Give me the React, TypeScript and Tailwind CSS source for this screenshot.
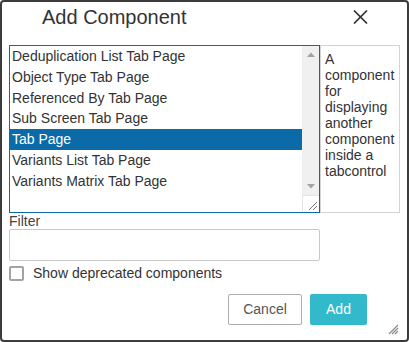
import React from "react";

const items = [
  "Deduplication List Tab Page",
  "Object Type Tab Page",
  "Referenced By Tab Page",
  "Sub Screen Tab Page",
  "Tab Page",
  "Variants List Tab Page",
  "Variants Matrix Tab Page",
];

export default function App() {
  return (
    <div className="relative w-[409px] h-[342px] border-2 border-[#3c3c3c] rounded-[4px] bg-white flex flex-col text-[#333] font-['Liberation_Sans',Arial,sans-serif]">
      <div className="h-[30px] flex items-center justify-between pl-[40px] pr-[39px]">
        <div className="text-[20px] leading-[24px] text-[#333]">Add Component</div>
        <svg width="15" height="14" viewBox="0 0 15 14" className="block">
          <path d="M1 0.5 L14 13.5 M14 0.5 L1 13.5" stroke="#333" strokeWidth="1.7" fill="none" />
        </svg>
      </div>

      <div className="mt-[13px] flex pl-[7px]">
        <div className="w-[311px] h-[168px] border border-[#0b6aa8] flex">
          <div className="flex-1 flex flex-col">
            {items.map((it) => (
              <div
                key={it}
                className={
                  it === "Tab Page"
                    ? "h-[20.8px] leading-[20.8px] pl-[2px] text-[14px] bg-[#0b6aa8] text-white whitespace-nowrap"
                    : "h-[20.8px] leading-[20.8px] pl-[2px] text-[14px] text-[#333] whitespace-nowrap"
                }
              >
                {it}
              </div>
            ))}
          </div>
          <div className="w-[17px] bg-[#f0f0f0] flex flex-col">
            <div className="h-[17px] flex items-center justify-center">
              <svg width="8" height="5" viewBox="0 0 8 5">
                <path d="M0 5 L4 0.5 L8 5 Z" fill="#a3a3a3" />
              </svg>
            </div>
            <div className="flex-1" />
            <div className="h-[17px] flex items-center justify-center">
              <svg width="8" height="5" viewBox="0 0 8 5">
                <path d="M0 0 L4 4.5 L8 0 Z" fill="#a3a3a3" />
              </svg>
            </div>
            <div className="h-[17px] bg-white border-l border-t border-[#e4e4e4] relative">
              <svg width="17" height="17" viewBox="0 0 17 17" className="absolute right-0 bottom-0">
                <path d="M7 15 L15 7 M11 15 L15 11" stroke="#7a7a7a" strokeWidth="1" fill="none" />
              </svg>
            </div>
          </div>
        </div>
        <div className="w-[80px] h-[168px] border border-[#d3d3d3] pl-[4px] pt-[5px] text-[14px] leading-[16px] text-[#333]">
          A component for displaying another component inside a tabcontrol
        </div>
      </div>

      <div className="pl-[7px] text-[14px] leading-[16px] text-[#444]">Filter</div>
      <div className="ml-[7px] w-[311px] h-[32px] border border-[#c8c8c8] rounded-[2px] bg-white" />

      <div className="mt-[5px] ml-[7px] flex items-center gap-[9px]">
        <div className="w-[15px] h-[15px] border-2 border-[#a3a3a3] rounded-[2px]" />
        <div className="text-[14px] leading-[15px] text-[#333]">Show deprecated components</div>
      </div>

      <div className="mt-[13px] flex justify-end pr-[40px] gap-[8px]">
        <div className="w-[74px] h-[31px] border border-[#adadad] rounded-[2px] flex items-center justify-center text-[14px] text-[#555]">
          Cancel
        </div>
        <div className="w-[57px] h-[31px] rounded-[2px] bg-[#33b9cc] flex items-center justify-center text-[14px] text-white">
          Add
        </div>
      </div>

      <svg width="12" height="12" viewBox="0 0 12 12" className="absolute right-[8px] bottom-[5px]">
        <path d="M2 11 L11 2 M5 11 L11 5 M8 11 L11 8" stroke="#8a8a8a" strokeWidth="1.2" fill="none" />
      </svg>
    </div>
  );
}
